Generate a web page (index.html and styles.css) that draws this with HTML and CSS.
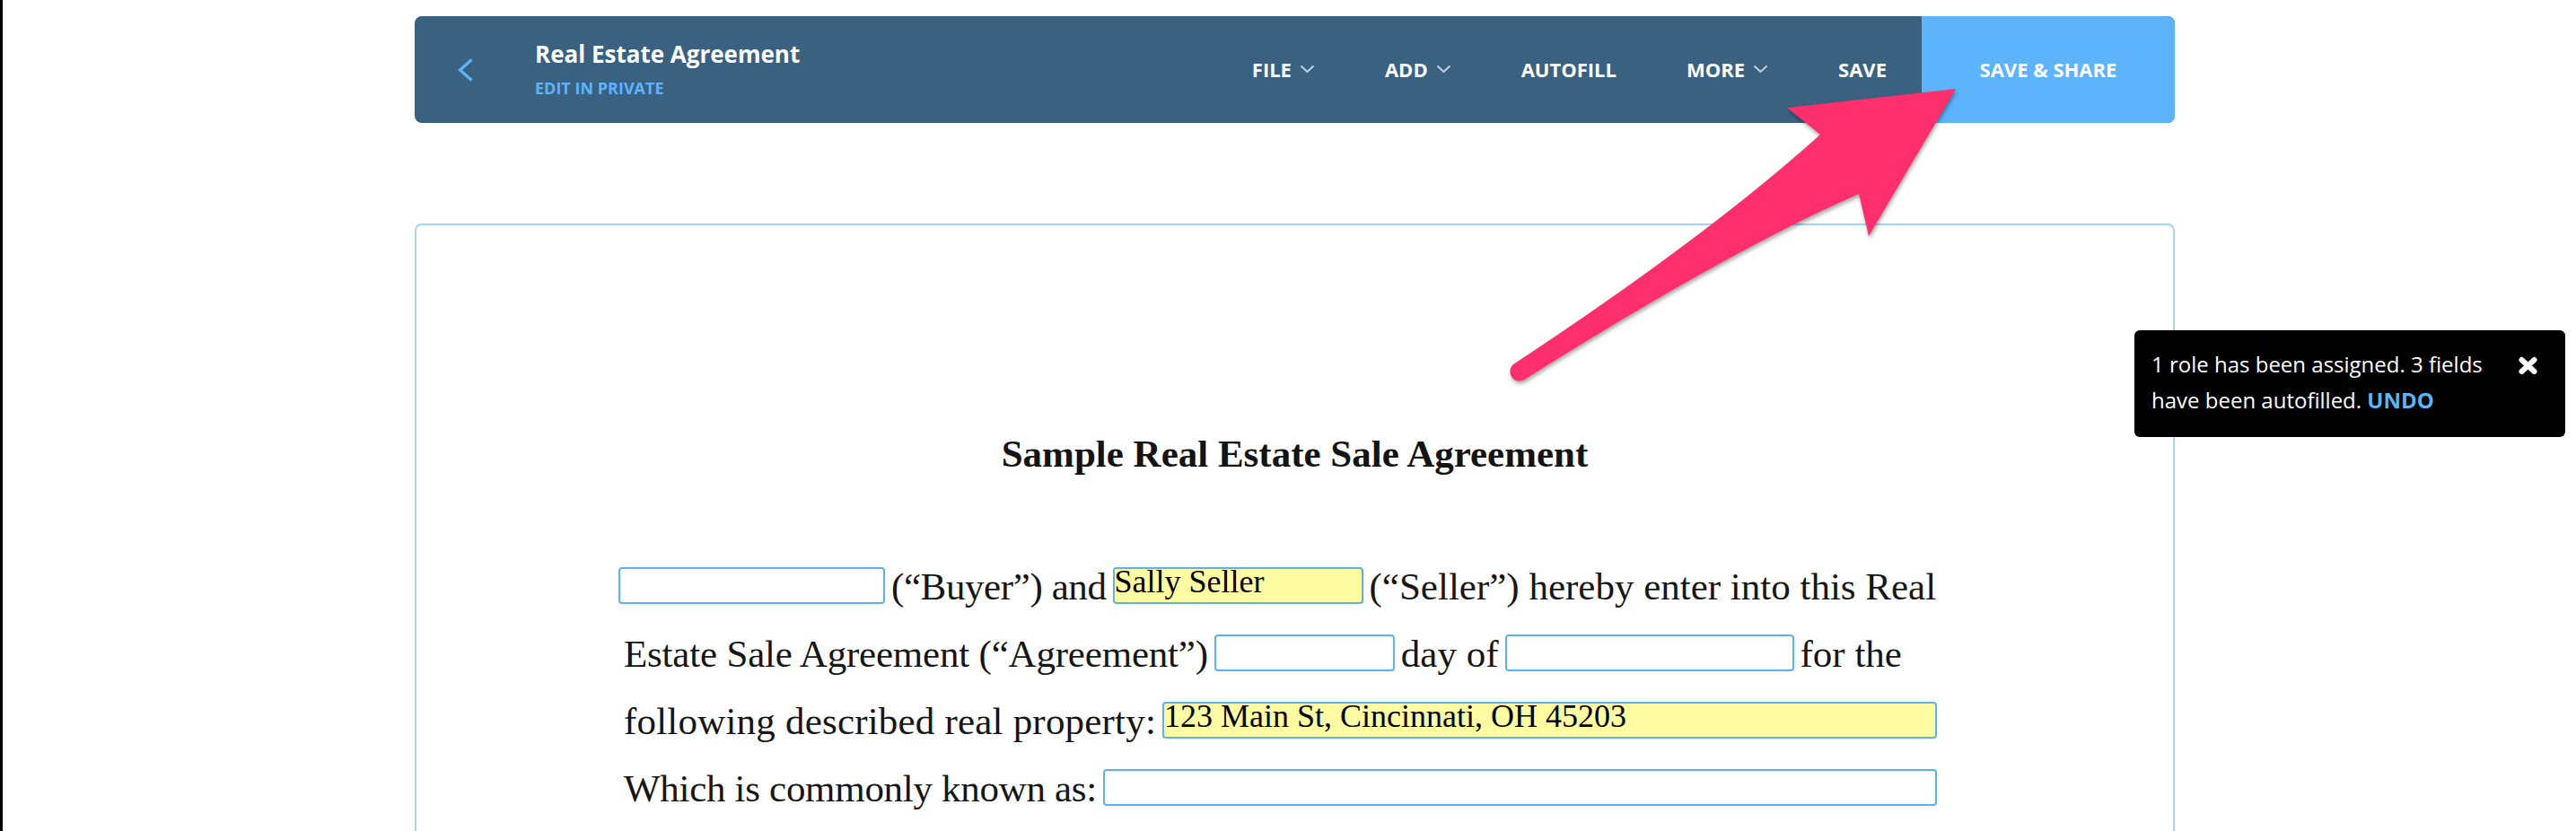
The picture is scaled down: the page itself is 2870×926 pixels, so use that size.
FILE: index.html
```html
<!DOCTYPE html>
<html lang="en">
<head>
<meta charset="utf-8">
<title>Real Estate Agreement</title>
<link rel="stylesheet" href="styles.css">
</head>
<body>
<div class="frame">
  <div class="edge"></div>
  <div class="app">
    <header class="toolbar">
      <a class="back" aria-label="Back">
        <svg width="17" height="26" viewBox="0 0 17 26"><path d="M15.5 1.5 L2.5 13 L15.5 24.5" fill="none" stroke="#5db4fd" stroke-width="3.2"/></svg>
      </a>
      <div class="doc-title">
        <div class="name">Real Estate Agreement</div>
        <div class="mode">EDIT IN PRIVATE</div>
      </div>
      <nav class="menu">
        <span class="item">FILE<svg class="caret" width="17" height="10" viewBox="0 0 17 10"><path d="M1.5 1.5 L8.5 8 L15.5 1.5" fill="none" stroke="#c5d1dc" stroke-width="2"/></svg></span>
        <span class="item">ADD<svg class="caret" width="17" height="10" viewBox="0 0 17 10"><path d="M1.5 1.5 L8.5 8 L15.5 1.5" fill="none" stroke="#c5d1dc" stroke-width="2"/></svg></span>
        <span class="item">AUTOFILL</span>
        <span class="item">MORE<svg class="caret" width="17" height="10" viewBox="0 0 17 10"><path d="M1.5 1.5 L8.5 8 L15.5 1.5" fill="none" stroke="#c5d1dc" stroke-width="2"/></svg></span>
        <span class="item">SAVE</span>
      </nav>
      <button class="share">SAVE &amp; SHARE</button>
    </header>

    <main class="sheet">
      <h1 class="doc-heading">Sample Real Estate Sale Agreement</h1>
      <div class="para">
        <div class="row">
          <span class="field w-buyer"></span>
          <span class="txt ls-buyer">(“Buyer”) and</span>
          <span class="field filled w-seller"><span class="value">Sally Seller</span></span>
          <span class="txt">(“Seller”) hereby enter into this Real</span>
        </div>
        <div class="row indent">
          <span class="txt ls-estate">Estate Sale Agreement (“Agreement”)</span>
          <span class="field w-day"></span>
          <span class="txt">day of</span>
          <span class="field w-month"></span>
          <span class="txt">for the</span>
        </div>
        <div class="row indent">
          <span class="txt ls-following">following described real property:</span>
          <span class="field filled grow"><span class="value">123 Main St, Cincinnati, OH 45203</span></span>
        </div>
        <div class="row indent">
          <span class="txt ls-which">Which is commonly known as:</span>
          <span class="field grow"></span>
        </div>
      </div>
    </main>
  </div>
</div>

<div class="toast">
  <div class="toast-text">
    <div class="toast-line">1 role has been assigned. 3 fields</div>
    <div class="toast-line"><span>have been autofilled.</span> <b class="undo">UNDO</b></div>
  </div>
  <svg class="close" width="23" height="21" viewBox="0 0 23 21"><path d="M4.5 4 L18.5 17 M18.5 4 L4.5 17" fill="none" stroke="#fff" stroke-width="6" stroke-linecap="round"/></svg>
</div>

<svg class="arrow" width="2870" height="926" viewBox="0 0 2870 926">
  <path d="M1686 406 Q1900 265 2028 150 L1991 120 L2179 99 L2082 263 L2071 216 Q1925 280 1700 422 A9 9 0 0 1 1686 406 Z" fill="#ff2e6c"/>
</svg>
</body>
</html>
```

FILE: styles.css
```css
html, body {
  margin: 0;
  padding: 0;
}

body {
  background: #ffffff;
  height: 926px;
  overflow: hidden;
  font-family: "Open Sans", "Liberation Sans", sans-serif;
}

.frame {
  display: flex;
  height: 926px;
}

.edge {
  width: 3px;
  background: #000;
  flex: none;
}

.app {
  flex: 1;
  padding: 18px 0 0 459px;
}

/* ---------- toolbar ---------- */
.toolbar {
  width: 1961px;
  height: 119px;
  background: #3b6180;
  border-radius: 8px;
  display: flex;
  align-items: center;
  overflow: hidden;
  color: #fff;
}

.back {
  display: flex;
  width: 17px;
  height: 26px;
  margin-left: 48px;
  flex: none;
}

.doc-title {
  align-self: flex-start;
  margin-left: 69px;
  padding-top: 26px;
}

.name {
  font-size: 26px;
  font-weight: 700;
  line-height: 33px;
  white-space: nowrap;
}

.mode {
  margin-top: 9px;
  font-size: 18px;
  font-weight: 700;
  line-height: 24px;
  color: #5db4fd;
  white-space: nowrap;
}

.menu {
  margin-left: auto;
  display: flex;
  align-items: center;
  height: 100%;
}

.item {
  display: flex;
  align-items: center;
  gap: 9px;
  padding: 0 39px 2px;
  font-size: 22px;
  font-weight: 700;
  line-height: 22px;
  white-space: nowrap;
}

.caret {
  display: block;
}

.share {
  width: 282px;
  align-self: stretch;
  flex: none;
  border: 0;
  padding: 0 0 2px;
  background: #5db4fd;
  color: #fff;
  font-family: "Open Sans", "Liberation Sans", sans-serif;
  font-size: 22px;
  font-weight: 700;
  line-height: 22px;
}

/* ---------- document ---------- */
.sheet {
  box-sizing: border-box;
  width: 1961px;
  height: 720px;
  margin-top: 112px;
  padding-top: 230px;
  border: 2px solid #a5d4fb;
  border-bottom: 0;
  border-radius: 8px 8px 0 0;
  background: #fff;
}

.doc-heading {
  margin: 0;
  text-align: center;
  font-family: "Liberation Serif", serif;
  font-size: 43px;
  font-weight: 700;
  line-height: 50px;
  color: #141414;
}

.para {
  margin-top: 101px;
  margin-left: 225px;
  width: 1469px;
  display: flex;
  flex-direction: column;
  gap: 34px;
}

.row {
  display: flex;
  align-items: flex-start;
  gap: 7px;
  height: 41px;
}

.row.indent {
  padding-left: 6px;
}

.txt {
  font-family: "Liberation Serif", serif;
  font-size: 43px;
  line-height: 41px;
  padding-top: 1px;
  color: #161616;
  white-space: nowrap;
  flex: none;
}

.ls-buyer { letter-spacing: -0.4px; }
.ls-estate { letter-spacing: -0.2px; }
.ls-following { letter-spacing: 0.2px; }
.ls-which { letter-spacing: -0.3px; }

.field {
  box-sizing: border-box;
  height: 41px;
  flex: none;
  border: 2px solid #5cb0f5;
  border-radius: 4px;
  background: #fff;
  font-family: "Liberation Serif", serif;
  font-size: 36px;
  color: #000;
  white-space: nowrap;
}

.field .value {
  display: block;
  margin-top: -4px;
  line-height: 37px;
}

.field.filled {
  background: #fffca3;
}

.w-buyer { width: 297px; }
.w-seller { width: 279px; }
.w-day { width: 201px; }
.w-month { width: 322px; }
.grow { flex: 1; }

/* ---------- toast ---------- */
.toast {
  position: absolute;
  left: 2378px;
  top: 368px;
  box-sizing: border-box;
  width: 480px;
  height: 119px;
  padding: 18px 30px 0 19px;
  display: flex;
  align-items: flex-start;
  background: #000;
  border-radius: 6px;
  color: #fff;
}

.toast-text {
  width: 392px;
  font-size: 24px;
  line-height: 40px;
  font-weight: 400;
}

.toast-line {
  white-space: nowrap;
}

.undo {
  color: #5db4fd;
  font-weight: 700;
}

.close {
  margin-left: auto;
  margin-top: 11px;
  flex: none;
}

/* ---------- annotation arrow ---------- */
.arrow {
  position: absolute;
  left: 0;
  top: 0;
  pointer-events: none;
  filter: drop-shadow(1px 3px 2px rgba(0, 0, 0, 0.35));
}
```
